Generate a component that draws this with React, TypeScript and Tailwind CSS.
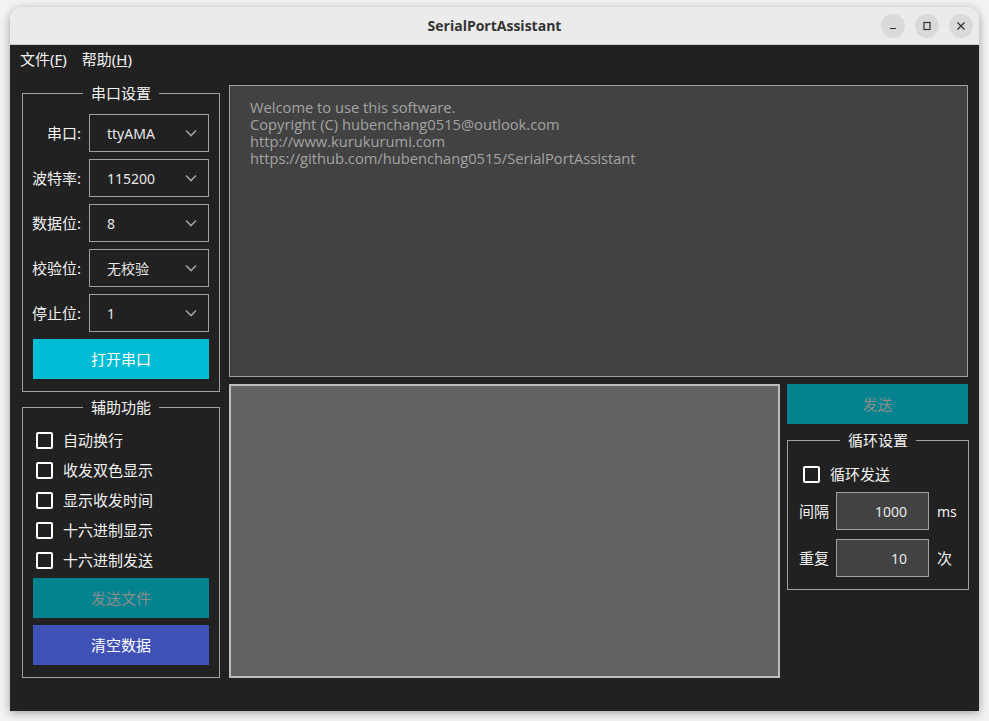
import React from 'react';

const cjk = { fontFamily: '"Noto Sans", "Noto Sans CJK SC", sans-serif' };
const latin = { fontFamily: '"Open Sans", "Noto Sans CJK SC", sans-serif' };

function Chevron() {
  return (
    <svg width="12" height="8" viewBox="0 0 12 8" className="shrink-0">
      <polyline points="1,1.5 6,6.5 11,1.5" fill="none" stroke="#a0a0a0" strokeWidth="1.6" />
    </svg>
  );
}

function Combo({ label, value }: { label: string; value: string }) {
  return (
    <div className="flex items-center gap-[8px] h-[38px]">
      <div className="w-[48px] shrink-0 flex justify-end whitespace-nowrap text-[15px] text-[#f2f2f2]">
        <span>{label}:</span>
      </div>
      <div className="w-[120px] h-[38px] border border-[#a0a0a0] flex items-center justify-between pl-[17px] pr-[11px] text-[14px] text-[#e8e8e8]">
        <span>{value}</span>
        <Chevron />
      </div>
    </div>
  );
}

function Check({ label }: { label: string }) {
  return (
    <div className="flex items-center h-[30px] gap-[10px]">
      <div className="w-[17px] h-[17px] border-2 border-white rounded-[2px] shrink-0" />
      <span className="text-[15px] text-[#f2f2f2] whitespace-nowrap">{label}</span>
    </div>
  );
}

function Group({ title, children, className }: { title: string; children: React.ReactNode; className?: string }) {
  return (
    <fieldset className={`border border-[#a0a0a0] ${className ?? ''}`}>
      <legend className="mx-auto px-[8px] text-[15px] leading-[16px] text-[#f2f2f2]">{title}</legend>
      {children}
    </fieldset>
  );
}

export default function App() {
  return (
    <div className="w-[989px] h-[721px] bg-[#f3f3f3] pt-[7px] pl-[10px] overflow-hidden" style={cjk}>
      <div className="w-[969px] h-[704px] rounded-t-[12px] overflow-hidden flex flex-col shadow-[0_2px_10px_rgba(0,0,0,0.35)]">
        {/* title bar */}
        <div className="h-[38px] bg-[#ebebeb] border-b border-[#d0d0d0] flex items-center relative shrink-0">
          <div className="flex-1 text-center text-[14px] font-bold text-[#333]" style={latin}>
            SerialPortAssistant
          </div>
          <div className="absolute right-[6px] top-[7px] flex gap-[10px]">
            <div className="w-[24px] h-[24px] rounded-full bg-[#dadada] flex items-center justify-center">
              <svg width="10" height="10" viewBox="0 0 10 10">
                <line x1="2" y1="7.5" x2="8" y2="7.5" stroke="#333" strokeWidth="1.2" />
              </svg>
            </div>
            <div className="w-[24px] h-[24px] rounded-full bg-[#dadada] flex items-center justify-center">
              <svg width="10" height="10" viewBox="0 0 10 10">
                <rect x="2" y="1.5" width="6" height="7" fill="none" stroke="#333" strokeWidth="1.2" />
              </svg>
            </div>
            <div className="w-[24px] h-[24px] rounded-full bg-[#dadada] flex items-center justify-center">
              <svg width="10" height="10" viewBox="0 0 10 10">
                <path d="M1.5 1.5 L8.5 8.5 M8.5 1.5 L1.5 8.5" stroke="#333" strokeWidth="1.3" />
              </svg>
            </div>
          </div>
        </div>

        <div className="flex-1 bg-[#212121] flex flex-col">
          {/* menu */}
          <div className="h-[28px] flex items-center pl-[10px] gap-[15px] text-[15px] text-[#f2f2f2]">
            <span>
              文件(<span className="underline">F</span>)
            </span>
            <span>
              帮助(<span className="underline">H</span>)
            </span>
          </div>

          <div className="flex pl-[12px] pr-[11px] pt-[12px] gap-[9px]">
            {/* left column */}
            <div className="w-[198px] flex flex-col gap-[7px] shrink-0">
              <Group title="串口设置" className="px-[10px] pt-[13px] pb-[12px]">
                <div className="flex flex-col gap-[7px]">
                  <Combo label="串口" value="ttyAMA" />
                  <Combo label="波特率" value="115200" />
                  <Combo label="数据位" value="8" />
                  <Combo label="校验位" value="无校验" />
                  <Combo label="停止位" value="1" />
                  <button className="h-[40px] bg-[#00bcd4] text-[15px] text-white">打开串口</button>
                </div>
              </Group>

              <Group title="辅助功能" className="px-[10px] pt-[10px] pb-[12px]">
                <div className="flex flex-col pl-[3px]">
                  <Check label="自动换行" />
                  <Check label="收发双色显示" />
                  <Check label="显示收发时间" />
                  <Check label="十六进制显示" />
                  <Check label="十六进制发送" />
                </div>
                <div className="flex flex-col gap-[7px] mt-[3px]">
                  <button className="h-[40px] bg-[#00838f] text-[15px] text-[#8c8c8c]">发送文件</button>
                  <button className="h-[40px] bg-[#3f51b5] text-[15px] text-white">清空数据</button>
                </div>
              </Group>
            </div>

            {/* right column */}
            <div className="flex-1 flex flex-col gap-[7px]">
              <div
                className="h-[292px] bg-[#424242] border border-[#9e9e9e] pl-[20px] pt-[13px] text-[14.7px] leading-[17px] text-[#a3a3a3]"
                style={latin}
              >
                <div>Welcome to use this software.</div>
                <div>Copyright (C) hubenchang0515@outlook.com</div>
                <div>http://www.kurukurumi.com</div>
                <div>https://github.com/hubenchang0515/SerialPortAssistant</div>
              </div>

              <div className="flex gap-[7px] h-[294px]">
                <div className="flex-1 bg-[#636363] border-2 border-[#bdbdbd]" />
                <div className="w-[181px] flex flex-col gap-[8px]">
                  <button className="h-[40px] bg-[#00838f] text-[15px] text-[#8c8c8c]">发送</button>
                  <Group title="循环设置" className="px-[11px] pt-[11px] pb-[12px]">
                    <div className="pl-[4px]">
                      <Check label="循环发送" />
                    </div>
                    <div className="flex flex-col gap-[9px] mt-[3px]">
                      <div className="flex items-center gap-[7px]">
                        <span className="w-[30px] text-[15px] text-[#f2f2f2] whitespace-nowrap">间隔</span>
                        <div className="w-[93px] h-[38px] bg-[#424242] border border-[#a0a0a0] flex items-center justify-end pr-[21px] text-[14px] text-[#e8e8e8]">
                          1000
                        </div>
                        <span className="ml-[1px] text-[14px] text-[#f2f2f2]">ms</span>
                      </div>
                      <div className="flex items-center gap-[7px]">
                        <span className="w-[30px] text-[15px] text-[#f2f2f2] whitespace-nowrap">重复</span>
                        <div className="w-[93px] h-[38px] bg-[#424242] border border-[#a0a0a0] flex items-center justify-end pr-[21px] text-[14px] text-[#e8e8e8]">
                          10
                        </div>
                        <span className="ml-[1px] text-[15px] text-[#f2f2f2]">次</span>
                      </div>
                    </div>
                  </Group>
                </div>
              </div>
            </div>
          </div>
        </div>
      </div>
    </div>
  );
}
